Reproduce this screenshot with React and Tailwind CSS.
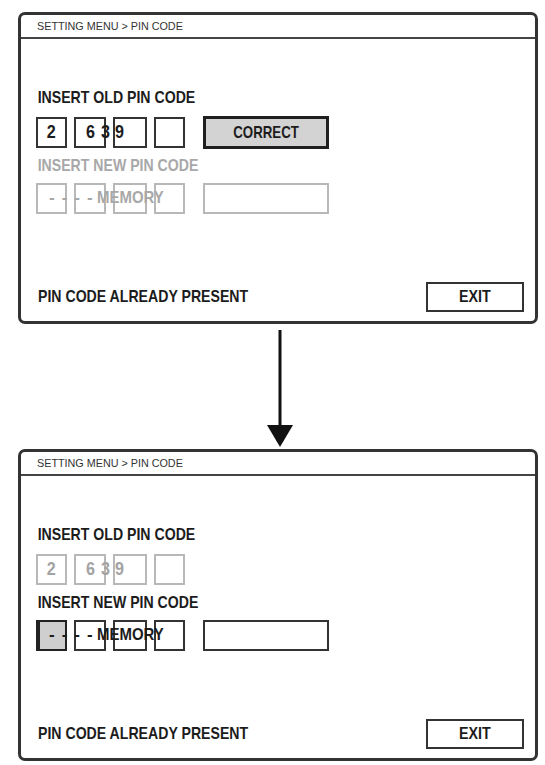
function PinBox({ w, active, selected, children }) {
    return (
        <div className={`h-[31px] shrink-0 flex items-center justify-center border-2 ${w} ${selected ? 'bg-[#cfcfcf] border-[#222] border-l-4' : active ? 'border-[#333]' : 'border-[#b8b8b8]'}`}>
            {children}
        </div>
    );
}

function Panel({ step }) {
    const oldActive = step === 1;
    const newActive = step === 2;
    const oldColor = oldActive ? 'text-[#1c1c1c]' : 'text-[#a3a3a3]';
    const newColor = newActive ? 'text-[#1c1c1c]' : 'text-[#a8a8a8]';
    const digit = `absolute top-[5px] inline-block text-[19px] leading-[22px] font-bold scale-x-[0.85] origin-left ${oldColor}`;

    return (
        <div className="mx-[18px] w-[520px] h-[312px] flex flex-col border-[3px] border-[#333] rounded-[7px] bg-white">
            <div className="h-[24px] shrink-0 flex items-center pl-[16px] border-b-2 border-[#444] text-[11px] text-[#333]">
                <span className="inline-block scale-x-[0.98] origin-left">SETTING MENU &gt; PIN CODE</span>
            </div>

            <div className="flex flex-col pl-[15px] pt-[49px]">
                <div className="text-[17px] leading-[20px] font-bold text-[#1c1c1c] pl-[2px] scale-x-[0.83] origin-left">INSERT OLD PIN CODE</div>

                <div className="relative mt-[8px] h-[33px] flex items-center">
                    <div className="flex items-center gap-[7px]">
                        <PinBox w="w-[31px]" active={oldActive}>
                            <span className={`inline-block text-[19px] font-bold scale-x-[0.85] ${oldColor}`}>2</span>
                        </PinBox>
                        <PinBox w="w-[32px]" active={oldActive} />
                        <PinBox w="w-[34px]" active={oldActive} />
                        <PinBox w="w-[31px]" active={oldActive} />
                    </div>
                    {oldActive && (
                        <div className="ml-[18px] w-[126px] h-[33px] flex items-center justify-center border-[3px] border-[#1f1f1f] bg-[#d3d3d3] text-[17px] font-bold text-[#1c1c1c]">
                            <span className="inline-block scale-x-[0.78]">CORRECT</span>
                        </div>
                    )}
                    <span className={`${digit} left-[50px]`}>6</span>
                    <span className={`${digit} left-[65px]`}>3</span>
                    <span className={`${digit} left-[79px]`}>9</span>
                </div>

                <div className={`mt-[7px] text-[17px] leading-[20px] font-bold pl-[2px] scale-x-[0.83] origin-left ${newColor}`}>INSERT NEW PIN CODE</div>

                <div className="relative mt-[7px] h-[31px] flex items-center">
                    <div className="flex items-center gap-[7px]">
                        <PinBox w="w-[31px]" active={newActive} selected={newActive} />
                        <PinBox w="w-[32px]" active={newActive} />
                        <PinBox w="w-[34px]" active={newActive} />
                        <PinBox w="w-[31px]" active={newActive} />
                    </div>
                    <div className={`ml-[18px] w-[126px] h-[31px] border-2 ${newActive ? 'border-[#333]' : 'border-[#b8b8b8]'}`}></div>
                    <div className={`absolute left-[13px] top-[5px] flex items-center gap-[7px] text-[17px] leading-[20px] font-bold ${newColor}`}>
                        <span>-</span>
                        <span>-</span>
                        <span>-</span>
                        <span>-</span>
                        <span className="inline-block -ml-[3px] scale-x-[0.88] origin-left">MEMORY</span>
                    </div>
                </div>
            </div>

            <div className="mt-auto flex items-center justify-between pl-[17px] pr-[11px] pb-[9px]">
                <span className="inline-block text-[17px] leading-[20px] font-bold text-[#1c1c1c] scale-x-[0.83] origin-left">PIN CODE ALREADY PRESENT</span>
                <div className="w-[98px] h-[30px] flex items-center justify-center border-2 border-[#333] text-[17px] font-bold text-[#1c1c1c]">
                    <span className="inline-block scale-x-[0.84]">EXIT</span>
                </div>
            </div>
        </div>
    );
}

export default function App() {
    return (
        <div className="w-[545px] h-[765px] bg-white pt-[12px] font-['Liberation_Sans',Arial,sans-serif] overflow-hidden">
            <Panel step={1} />
            <div className="h-[125px] ml-[266px]">
                <svg width="28" height="125" viewBox="0 0 28 125" aria-hidden="true">
                    <line x1="14" y1="6" x2="14" y2="104" stroke="#111" strokeWidth="3" />
                    <polygon points="1,101 27,101 14,123" fill="#111" />
                </svg>
            </div>
            <Panel step={2} />
        </div>
    );
}
